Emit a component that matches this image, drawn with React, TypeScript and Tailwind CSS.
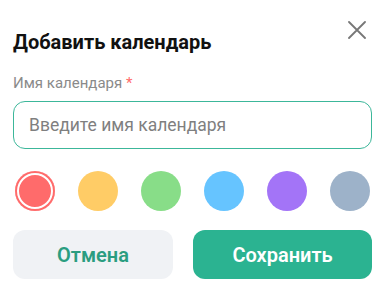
import React, { useState } from 'react';

const colors = ['#ff6b6b', '#ffcc66', '#88dd88', '#66c4ff', '#a374f7', '#9db2c9'];

const App: React.FC = () => {
  const [selected, setSelected] = useState(0);
  const [name, setName] = useState('');

  return (
    <div className="w-[385px] h-[304px] bg-white font-['Roboto',sans-serif] px-[13px] pt-[29px]">
      {/* Header */}
      <div className="relative flex items-center">
        <h2 className="text-[20px] leading-[26px] font-bold text-[#111]">Добавить календарь</h2>
        <button className="absolute right-[6px] -top-[8px] w-[18px] h-[18px] text-[#777]">
          <svg viewBox="0 0 18 18" className="w-[18px] h-[18px]" fill="none" stroke="currentColor" strokeWidth="1.8" strokeLinecap="round">
            <path d="M1 1L17 17M17 1L1 17" />
          </svg>
        </button>
      </div>

      {/* Name field */}
      <label className="block mt-[19px] text-[15px] leading-[18px] text-[#8a8a8a]">
        Имя календаря <span className="text-[#ff6b6b]">*</span>
      </label>
      <input
        value={name}
        onChange={(e) => setName(e.target.value)}
        autoFocus
        placeholder="Введите имя календаря"
        className="mt-[9px] w-full h-[48px] px-[15px] rounded-[12px] border border-[#3cb79a] text-[17.5px] text-[#333] placeholder-[#7f7f7f] outline-none caret-[#222]"
      />

      {/* Colours */}
      <div className="flex justify-between px-[2px] mt-[22px]">
        {colors.map((c, i) => (
          <button
            key={c}
            onClick={() => setSelected(i)}
            className="w-[40px] h-[40px] rounded-full"
            style={{
              backgroundColor: c,
              boxShadow: i === selected ? `inset 0 0 0 2px ${c}, inset 0 0 0 4px #fff` : undefined,
            }}
          />
        ))}
      </div>

      {/* Actions */}
      <div className="flex gap-[20px] mt-[19px]">
        <button className="w-[160px] h-[49px] rounded-[12px] bg-[#f0f2f5] text-[#2a9d80] text-[20px] font-semibold">
          Отмена
        </button>
        <button className="flex-1 h-[49px] rounded-[12px] bg-[#2bb391] text-white text-[20px] font-semibold">
          Сохранить
        </button>
      </div>
    </div>
  );
};

export default App;
